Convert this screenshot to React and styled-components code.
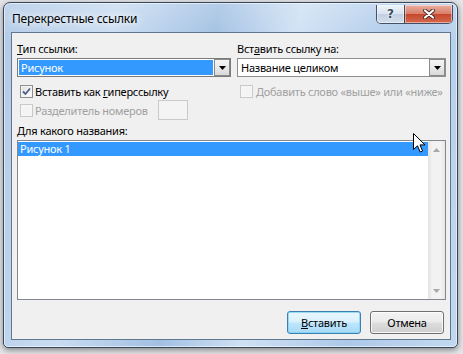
import React from 'react';
import styled, { createGlobalStyle } from 'styled-components';

const GlobalStyle = createGlobalStyle`
  html, body {
    margin: 0;
    padding: 0;
  }
  body {
    width: 463px;
    height: 354px;
    overflow: hidden;
    background: #e4e6e9;
    font-family: "Noto Sans", "Open Sans", sans-serif;
  }
`;

const Page = styled.div`
  position: relative;
  box-sizing: border-box;
  width: 463px;
  height: 354px;
  padding: 2px 0 0 3px;
  display: flex;
  align-items: flex-start;
`;

const Window = styled.div`
  box-sizing: border-box;
  width: 455px;
  height: 346px;
  display: flex;
  flex-direction: column;
  padding: 0 6px 7px 7px;
  border: 1px solid #38475a;
  border-radius: 7px 7px 5px 5px;
  background:
    linear-gradient(180deg, rgba(255,255,255,0.2), rgba(255,255,255,0) 40px),
    linear-gradient(100deg, #b1cae7 0%, #c9dcf1 22%, #a2c0e3 42%, #cfe1f4 58%, #adc9e9 78%, #c2d8ef 100%);
  box-shadow: inset 0 0 0 1px rgba(255,255,255,0.55), 0 2px 6px rgba(0,0,0,0.45);
`;

const TitleBar = styled.div`
  height: 29px;
  flex: none;
  display: flex;
  align-items: flex-start;
  margin: 0 -6px 0 -7px;
  padding: 0 4px 0 8px;
`;

const Title = styled.div`
  flex: 1;
  margin-top: 8px;
  font-size: 12px;
  line-height: 16px;
  letter-spacing: -0.2px;
  color: #000;
  text-shadow: 0 0 6px #fff, 0 0 10px rgba(255,255,255,0.9);
`;

const CaptionButtons = styled.div`
  display: flex;
  margin-top: 2px;
  height: 18px;
  border: 1px solid rgba(45, 58, 80, 0.85);
  border-top: none;
  border-radius: 0 0 5px 5px;
  overflow: hidden;
`;

const CaptionButton = styled.div`
  width: ${p => p.$w}px;
  height: 100%;
  display: flex;
  align-items: center;
  justify-content: center;
  box-shadow: inset 0 0 0 1px rgba(255,255,255,0.45);
  background: ${p => p.$close
    ? 'linear-gradient(180deg, #eab0a2 0%, #d9806b 48%, #c6472e 52%, #d56a4f 100%)'
    : 'linear-gradient(180deg, #eef3f9 0%, #d9e3ef 48%, #c1d0e2 52%, #d3deea 100%)'};
  border-left: ${p => (p.$close ? '1px solid rgba(45,58,80,0.85)' : 'none')};
`;

const HelpGlyph = styled.span`
  font-family: "DejaVu Sans", sans-serif;
  font-weight: bold;
  font-size: 12px;
  line-height: 12px;
  color: #3a4a63;
  text-shadow: 0 0 2px #fff, 0 0 2px #fff;
`;

const Client = styled.div`
  flex: 1;
  display: flex;
  flex-direction: column;
  box-sizing: border-box;
  border: 1px solid #61768f;
  background: #f0f0f0;
  padding: 8px 4px 5px 5px;
  font-size: 11px;
  letter-spacing: -0.25px;
  color: #000;
`;

const Columns = styled.div`
  display: grid;
  grid-template-columns: 214px 209px;
  column-gap: 6px;
`;

const Column = styled.div`
  display: flex;
  flex-direction: column;
`;

const Label = styled.div`
  height: 15px;
  line-height: 15px;
  margin-top: ${p => p.$mt || 0}px;
  white-space: nowrap;
`;

const U = styled.span`
  text-decoration: underline;
  text-underline-offset: 1px;
`;

const Combo = styled.div`
  margin-top: 2px;
  height: 19px;
  box-sizing: border-box;
  display: flex;
  border: 1px solid ${p => (p.$focused ? '#7a7a7a' : '#8e8f8f')};
  background: #fff;
  padding: 0 0 0 1px;
`;

const ComboValue = styled.div`
  flex: 1;
  margin: 1px 1px 1px 0;
  padding-left: 2px;
  line-height: 15px;
  white-space: nowrap;
  background: ${p => (p.$selected ? '#3399ff' : 'transparent')};
  color: ${p => (p.$selected ? '#fff' : '#000')};
`;

const ComboArrow = styled.div`
  width: 16px;
  box-sizing: border-box;
  display: flex;
  align-items: center;
  justify-content: center;
  border: 1px solid #8a8a8a;
  background: linear-gradient(180deg, #f6f6f6 0%, #e9e9e9 50%, #d9d9d9 100%);
`;

const CheckRow = styled.div`
  display: flex;
  align-items: center;
  height: ${p => p.$h || 16}px;
  margin-top: ${p => p.$mt || 0}px;
  padding-left: 3px;
  white-space: nowrap;
  color: ${p => (p.$disabled ? '#a0a0a0' : '#000')};
`;

const Box = styled.div`
  flex: none;
  width: 13px;
  height: 13px;
  box-sizing: border-box;
  margin-right: ${p => p.$gap || 2}px;
  border: 1px solid ${p => (p.$disabled ? '#c9c9c9' : '#8e8f8f')};
  background: ${p => (p.$disabled
    ? '#f4f4f4'
    : 'linear-gradient(135deg, #dcdcdc 0%, #f4f4f4 60%, #ffffff 100%)')};
  box-shadow: inset 0 0 0 1px ${p => (p.$disabled ? '#f7f7f7' : '#f4f4f4')};
  display: flex;
  align-items: center;
  justify-content: center;
`;

const CheckText = styled.span`
  flex: none;
  width: ${p => (p.$w ? `${p.$w}px` : 'auto')};
`;

const SmallField = styled.div`
  width: 30px;
  height: 20px;
  box-sizing: border-box;
  border: 1px solid #c9c9c9;
  background: #f4f4f4;
`;

const ListBox = styled.div`
  margin-top: 2px;
  height: 160px;
  box-sizing: border-box;
  display: flex;
  border: 1px solid #828790;
  background: #fff;
`;

const Items = styled.div`
  flex: 1;
  padding-top: 1px;
`;

const Item = styled.div`
  height: 14px;
  line-height: 14px;
  padding-left: 2px;
  white-space: nowrap;
  background: ${p => (p.$selected ? '#3399ff' : 'transparent')};
  color: ${p => (p.$selected ? '#fff' : '#000')};
`;

const ScrollBar = styled.div`
  width: 17px;
  display: flex;
  flex-direction: column;
  justify-content: space-between;
  background: linear-gradient(90deg, #e3e3e3 0%, #f2f2f2 25%, #f2f2f2 75%, #e6e6e6 100%);
`;

const ScrollArrow = styled.div`
  height: 17px;
  display: flex;
  align-items: center;
  justify-content: center;
`;

const ButtonRow = styled.div`
  display: flex;
  justify-content: flex-end;
  gap: 9px;
  margin-top: 11px;
  padding-right: 2px;
`;

const Button = styled.div`
  width: 74px;
  height: 23px;
  box-sizing: border-box;
  display: flex;
  align-items: center;
  justify-content: center;
  border-radius: 3px;
  border: 1px solid ${p => (p.$default ? '#3c7fb1' : '#707070')};
  background: ${p => (p.$default
    ? 'linear-gradient(180deg, #eaf6fd 0%, #d9f0fc 48%, #bee6fd 52%, #a7d9f5 100%)'
    : 'linear-gradient(180deg, #f2f2f2 0%, #ebebeb 48%, #dddddd 52%, #cfcfcf 100%)')};
  box-shadow: inset 0 0 0 1px ${p => (p.$default ? 'rgba(120,210,240,0.7)' : 'rgba(255,255,255,0.8)')};
`;

const Cursor = styled.svg`
  position: absolute;
  left: 413px;
  top: 133px;
`;

const DownTriangle = ({ color = '#000' }) => (
  <svg width="7" height="4" viewBox="0 0 7 4">
    <path d="M0 0 H7 L3.5 4 Z" fill={color} />
  </svg>
);

const UpTriangle = ({ color }) => (
  <svg width="7" height="4" viewBox="0 0 7 4">
    <path d="M0 4 H7 L3.5 0 Z" fill={color} />
  </svg>
);

export default function App() {
  return (
    <Page>
      <GlobalStyle />
      <Window>
        <TitleBar>
          <Title>Перекрестные ссылки</Title>
          <CaptionButtons>
            <CaptionButton $w={27}>
              <HelpGlyph>?</HelpGlyph>
            </CaptionButton>
            <CaptionButton $w={47} $close>
              <svg width="12" height="10" viewBox="0 0 12 10">
                <path d="M2 1.5 L10 8.5 M10 1.5 L2 8.5" stroke="#4a2a26" strokeWidth="4" strokeLinecap="round" />
                <path d="M2 1.5 L10 8.5 M10 1.5 L2 8.5" stroke="#ffffff" strokeWidth="2.2" strokeLinecap="round" />
              </svg>
            </CaptionButton>
          </CaptionButtons>
        </TitleBar>

        <Client>
          <Columns>
            <Column>
              <Label><U>Т</U>ип ссылки:</Label>
              <Combo $focused>
                <ComboValue $selected>Рисунок</ComboValue>
                <ComboArrow><DownTriangle /></ComboArrow>
              </Combo>
              <CheckRow $mt={6}>
                <Box>
                  <svg width="9" height="9" viewBox="0 0 9 9">
                    <path d="M1 4.5 L3.5 7 L8 1.5" fill="none" stroke="#4a5f8c" strokeWidth="1.8" />
                  </svg>
                </Box>
                <CheckText>Вставить как <U>г</U>иперссылку</CheckText>
              </CheckRow>
              <CheckRow $mt={1} $h={20} $disabled>
                <Box $disabled />
                <CheckText $w={123}>Разделитель номеров</CheckText>
                <SmallField />
              </CheckRow>
            </Column>

            <Column>
              <Label>Вст<U>а</U>вить ссылку на:</Label>
              <Combo>
                <ComboValue>Название целиком</ComboValue>
                <ComboArrow><DownTriangle /></ComboArrow>
              </Combo>
              <CheckRow $mt={6} $disabled>
                <Box $disabled $gap={3} />
                <CheckText>Добавить слово «выше» или «ниже»</CheckText>
              </CheckRow>
            </Column>
          </Columns>

          <Label $mt={3}><U>Д</U>ля какого названия:</Label>
          <ListBox>
            <Items>
              <Item $selected>Рисунок 1</Item>
            </Items>
            <ScrollBar>
              <ScrollArrow><UpTriangle color="#a8a8a8" /></ScrollArrow>
              <ScrollArrow><DownTriangle color="#a8a8a8" /></ScrollArrow>
            </ScrollBar>
          </ListBox>

          <ButtonRow>
            <Button $default><U>В</U>ставить</Button>
            <Button>Отмена</Button>
          </ButtonRow>
        </Client>
      </Window>

      <Cursor width="13" height="20" viewBox="0 0 13 20">
        <path d="M0.5 0.5 V16.5 L4.5 12.8 L7.2 19 L9.6 18 L7 11.9 H12 Z" fill="#fff" stroke="#000" strokeWidth="1" strokeLinejoin="round" />
      </Cursor>
    </Page>
  );
}
